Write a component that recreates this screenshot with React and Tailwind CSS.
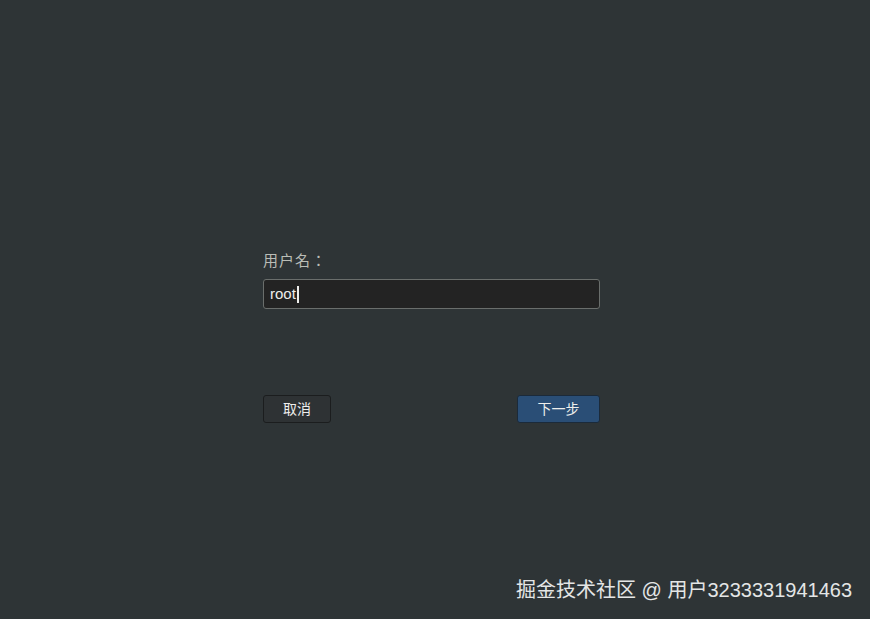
import React from 'react';

export default function App() {
    return (
        <div
            className="relative h-[619px] w-full overflow-hidden bg-[#2e3436]"
            style={{ fontFamily: '"Liberation Sans", "Noto Sans CJK SC", sans-serif' }}
        >
            <div className="ml-[263px] w-[337px] pt-[250px]">
                <div
                    className="text-[15px] leading-5 tracking-[1px] text-[#babdb6]"
                    style={{ fontFamily: '"Noto Sans CJK TC", sans-serif' }}
                >
                    用户名：
                </div>
                <div className="mt-[9px] flex h-[30px] items-center rounded-[3px] border border-[#6a6e6c] bg-[#232323] px-[6px]">
                    <span className="text-[15px] text-[#eeeeec]">root</span>
                    <span className="ml-[1px] h-[17px] w-[2px] bg-[#eeeeec]" />
                </div>
                <div className="mt-[86px] flex items-center justify-between">
                    <button className="h-[28px] w-[68px] rounded-[3px] border border-[#1b1d1e] bg-[#2e3234] text-[14px] text-[#eeeeec]">
                        取消
                    </button>
                    <button className="h-[28px] w-[83px] rounded-[3px] border border-[#1b2a3a] bg-[#2a4e76] text-[14px] text-[#eeeeec]">
                        下一步
                    </button>
                </div>
            </div>
            <div className="absolute bottom-[15px] right-[18px] text-[20px] leading-7 text-[#e4e6e6]">
                掘金技术社区 @ 用户3233331941463
            </div>
        </div>
    );
}
